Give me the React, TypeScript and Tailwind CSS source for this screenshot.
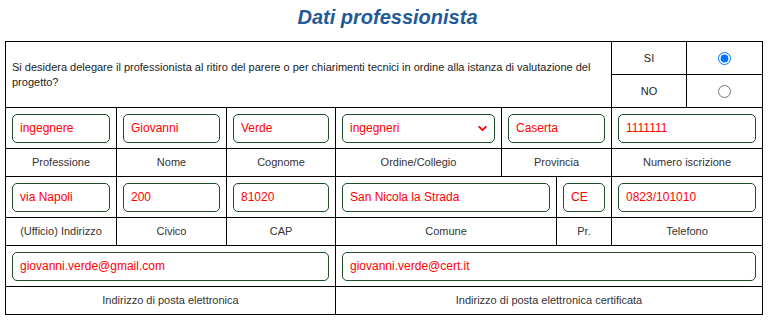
import { ChevronDown } from 'lucide-react'

const font = { fontFamily: '"Liberation Sans", Arial, sans-serif' }

function Field({ value, select = false }: { value: string; select?: boolean }) {
  return (
    <div className="flex h-[29px] items-center justify-between rounded-[5px] border border-[#1d4d2b] bg-white pl-[7px] pr-[5px] text-[12px] text-[#ff0000]">
      <span className="whitespace-nowrap">{value}</span>
      {select && <ChevronDown size={13} strokeWidth={3.5} className="text-[#ff0000]" />}
    </div>
  )
}

function Label({ text, span = 1 }: { text: string; span?: number }) {
  return (
    <td colSpan={span} className="h-[28px] border border-black text-center align-middle text-[11px] text-[#333]">
      {text}
    </td>
  )
}

function InputCell({ value, span = 1, select = false }: { value: string; span?: number; select?: boolean }) {
  return (
    <td colSpan={span} className="h-[41px] border border-black px-[6px] align-middle">
      <Field value={value} select={select} />
    </td>
  )
}

export default function App() {
  return (
    <div className="bg-white pb-[6px]" style={font}>
      <h1 className="pt-[4px] pb-[11px] text-center text-[20px] leading-[26px] font-bold italic text-[#1f5a99]">
        Dati professionista
      </h1>
      <table className="ml-[5px] w-[757px] table-fixed border-collapse">
        <colgroup>
          <col className="w-[111px]" />
          <col className="w-[110px]" />
          <col className="w-[109px]" />
          <col className="w-[166px]" />
          <col className="w-[55px]" />
          <col className="w-[55px]" />
          <col className="w-[75px]" />
          <col className="w-[76px]" />
        </colgroup>
        <tbody>
          <tr>
            <td colSpan={6} rowSpan={2} className="border border-black px-[6px] align-middle text-[11px] leading-[15px] text-[#222]">
              Si desidera delegare il professionista al ritiro del parere o per chiarimenti tecnici in ordine alla istanza di valutazione del progetto?
            </td>
            <td className="h-[33px] border border-black text-center text-[11px] text-[#222]">SI</td>
            <td className="h-[33px] border border-black text-center">
              <input type="radio" name="delega" defaultChecked className="m-0 h-[13px] w-[13px] align-middle" />
            </td>
          </tr>
          <tr>
            <td className="h-[33px] border border-black text-center text-[11px] text-[#222]">NO</td>
            <td className="h-[33px] border border-black text-center">
              <input type="radio" name="delega" className="m-0 h-[13px] w-[13px] align-middle" />
            </td>
          </tr>
          <tr>
            <InputCell value="ingegnere" />
            <InputCell value="Giovanni" />
            <InputCell value="Verde" />
            <InputCell value="ingegneri" select />
            <InputCell value="Caserta" span={2} />
            <InputCell value="1111111" span={2} />
          </tr>
          <tr>
            <Label text="Professione" />
            <Label text="Nome" />
            <Label text="Cognome" />
            <Label text="Ordine/Collegio" />
            <Label text="Provincia" span={2} />
            <Label text="Numero iscrizione" span={2} />
          </tr>
          <tr>
            <InputCell value="via Napoli" />
            <InputCell value="200" />
            <InputCell value="81020" />
            <InputCell value="San Nicola la Strada" span={2} />
            <InputCell value="CE" />
            <InputCell value="0823/101010" span={2} />
          </tr>
          <tr>
            <Label text="(Ufficio) Indirizzo" />
            <Label text="Civico" />
            <Label text="CAP" />
            <Label text="Comune" span={2} />
            <Label text="Pr." />
            <Label text="Telefono" span={2} />
          </tr>
          <tr>
            <InputCell value="giovanni.verde@gmail.com" span={3} />
            <InputCell value="giovanni.verde@cert.it" span={5} />
          </tr>
          <tr>
            <Label text="Indirizzo di posta elettronica" span={3} />
            <Label text="Indirizzo di posta elettronica certificata" span={5} />
          </tr>
        </tbody>
      </table>
    </div>
  )
}
